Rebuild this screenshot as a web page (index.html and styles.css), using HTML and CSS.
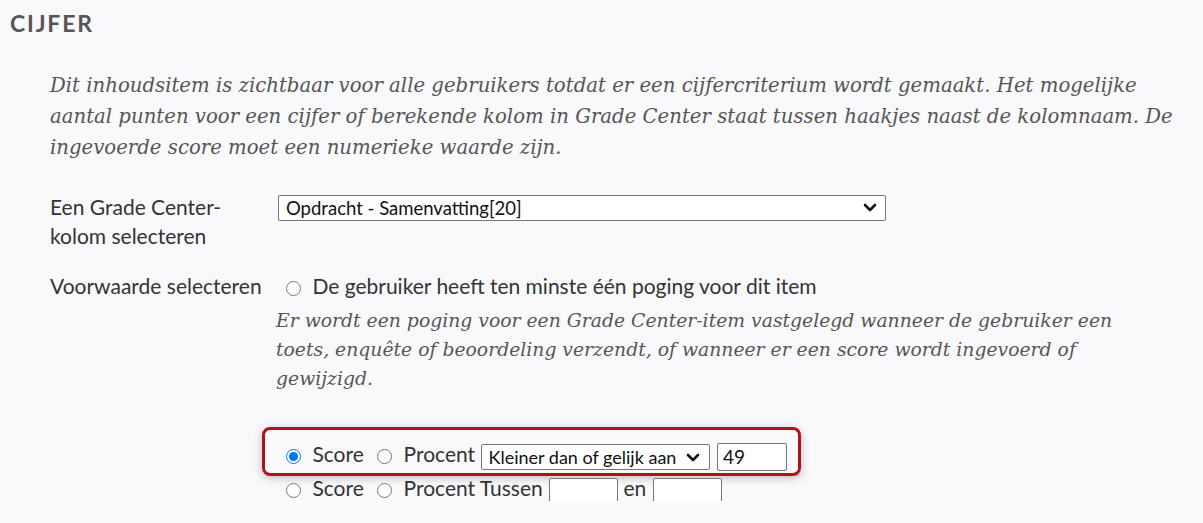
FILE: index.html
```html
<!DOCTYPE html>
<html lang="nl">
<head>
  <meta charset="UTF-8">
  <meta name="viewport" content="width=device-width, initial-scale=1">
  <title>Cijfer</title>
  <link rel="stylesheet" href="styles.css">
</head>
<body>
  <h2 class="section-title">Cijfer</h2>

  <p class="intro">Dit inhoudsitem is zichtbaar voor alle gebruikers totdat er een cijfercriterium wordt gemaakt. Het mogelijke aantal punten voor een cijfer of berekende kolom in Grade Center staat tussen haakjes naast de kolomnaam. De ingevoerde score moet een numerieke waarde zijn.</p>

  <div class="form-row first">
    <label class="field-label" for="column">Een Grade Center-kolom selecteren</label>
    <div class="field">
      <span class="select-wrap">
        <select id="column" class="column-select">
          <option>Opdracht - Samenvatting[20]</option>
        </select>
        <svg class="chevron" viewBox="0 0 14 9" width="14" height="9"><path d="M2 2l5 5 5-5" fill="none" stroke="#111" stroke-width="2.6" stroke-linecap="round" stroke-linejoin="round"/></svg>
      </span>
    </div>
  </div>

  <div class="form-row">
    <div class="field-label">Voorwaarde selecteren</div>
    <div class="field">
      <div class="option-line">
        <label><input type="radio" name="cond"> De gebruiker heeft ten minste één poging voor dit item</label>
      </div>
      <p class="help">Er wordt een poging voor een Grade Center-item vastgelegd wanneer de gebruiker een toets, enquête of beoordeling verzendt, of wanneer er een score wordt ingevoerd of gewijzigd.</p>

      <div class="score-box">
        <div class="score-line">
          <label><input type="radio" name="cond" checked> Score</label>
          <label><input type="radio" name="unit"> Procent</label>
          <span class="select-wrap">
            <select class="compare-select">
              <option>Kleiner dan of gelijk aan</option>
            </select>
            <svg class="chevron" viewBox="0 0 14 9" width="14" height="9"><path d="M2 2l5 5 5-5" fill="none" stroke="#111" stroke-width="2.6" stroke-linecap="round" stroke-linejoin="round"/></svg>
          </span>
          <input type="text" class="num-input" value="49">
        </div>
      </div>

      <div class="score-line second">
        <label><input type="radio" name="cond"> Score</label>
        <label><input type="radio" name="unit2"> Procent</label>
        Tussen
        <input type="text" class="num-input small">
        en
        <input type="text" class="num-input small">
      </div>
    </div>
  </div>
</body>
</html>
```

FILE: styles.css
```css
body {
  font-family: Lato, "Open Sans", sans-serif;
  background: #f9f9fb;
  color: #333;
  margin: 0;
  padding: 0 25px 0 10px;
}
.section-title {
  font-size: 23px;
  font-weight: bold;
  text-transform: uppercase;
  letter-spacing: 1.8px;
  color: #555;
  margin: 10px 0 0 0;
  line-height: 26px;
}
.intro {
  font-family: "DejaVu Serif", serif;
  font-style: italic;
  font-size: 19.7px;
  line-height: 31px;
  color: #555;
  margin: 34px 0 0 40px;
}
.form-row {
  display: grid;
  grid-template-columns: 228px 1fr;
  margin: 21px 0 0 40px;
}
.form-row.first {
  margin-top: 29px;
}
.field-label {
  font-size: 21px;
  line-height: 29px;
  color: #333;
  padding-right: 13px;
}
.select-wrap {
  position: relative;
  display: inline-block;
}
.chevron {
  position: absolute;
  right: 9px;
  top: 50%;
  margin-top: -4px;
  pointer-events: none;
}
select {
  appearance: none;
  font-family: Lato, sans-serif;
  color: #111;
  background: #fff;
  border: 1px solid #767676;
  border-radius: 2px;
}
.column-select {
  width: 608px;
  height: 26px;
  margin-top: 3px;
  font-size: 18.5px;
  padding: 0 30px 0 7px;
}
.option-line {
  font-size: 21px;
  line-height: 29px;
  color: #333;
}
input[type="radio"] {
  width: 15px;
  height: 15px;
  margin: 0 6px 0 8px;
  vertical-align: -2px;
}
.help {
  font-family: "DejaVu Serif", serif;
  font-style: italic;
  font-size: 18.8px;
  line-height: 29px;
  color: #555;
  margin: 6px 20px 0 -2px;
}
.score-box {
  width: 533px;
  margin: 34px 0 0 -16px;
  padding: 9px 0 4px 0;
  border: 3px solid #b3101e;
  border-radius: 8px;
  box-shadow: 0 2px 9px rgba(0, 0, 0, 0.25);
}
.score-line {
  font-size: 21px;
  line-height: 30px;
  height: 30px;
  color: #333;
  white-space: nowrap;
}
.score-line .select-wrap,
.score-line .num-input {
  vertical-align: middle;
}
.score-box .score-line {
  padding-left: 13px;
}
.score-line.second {
  height: 26px;
  line-height: 26px;
  margin-top: -1px;
}
.compare-select {
  display: block;
  width: 229px;
  height: 26px;
  margin: 0 0 0 1px;
  padding: 0 22px 0 6px;
  font-size: 18px;
}
.score-line .chevron {
  right: 10px;
}
.num-input {
  box-sizing: border-box;
  width: 70px;
  height: 28px;
  border: 1px solid #767676;
  border-radius: 2px;
  background: #fff;
  font-family: Lato, sans-serif;
  font-size: 19px;
  color: #111;
  padding: 0 5px;
  margin: 0 0 0 1px;
}
.num-input.small {
  width: 69px;
  height: 26px;
}
```
